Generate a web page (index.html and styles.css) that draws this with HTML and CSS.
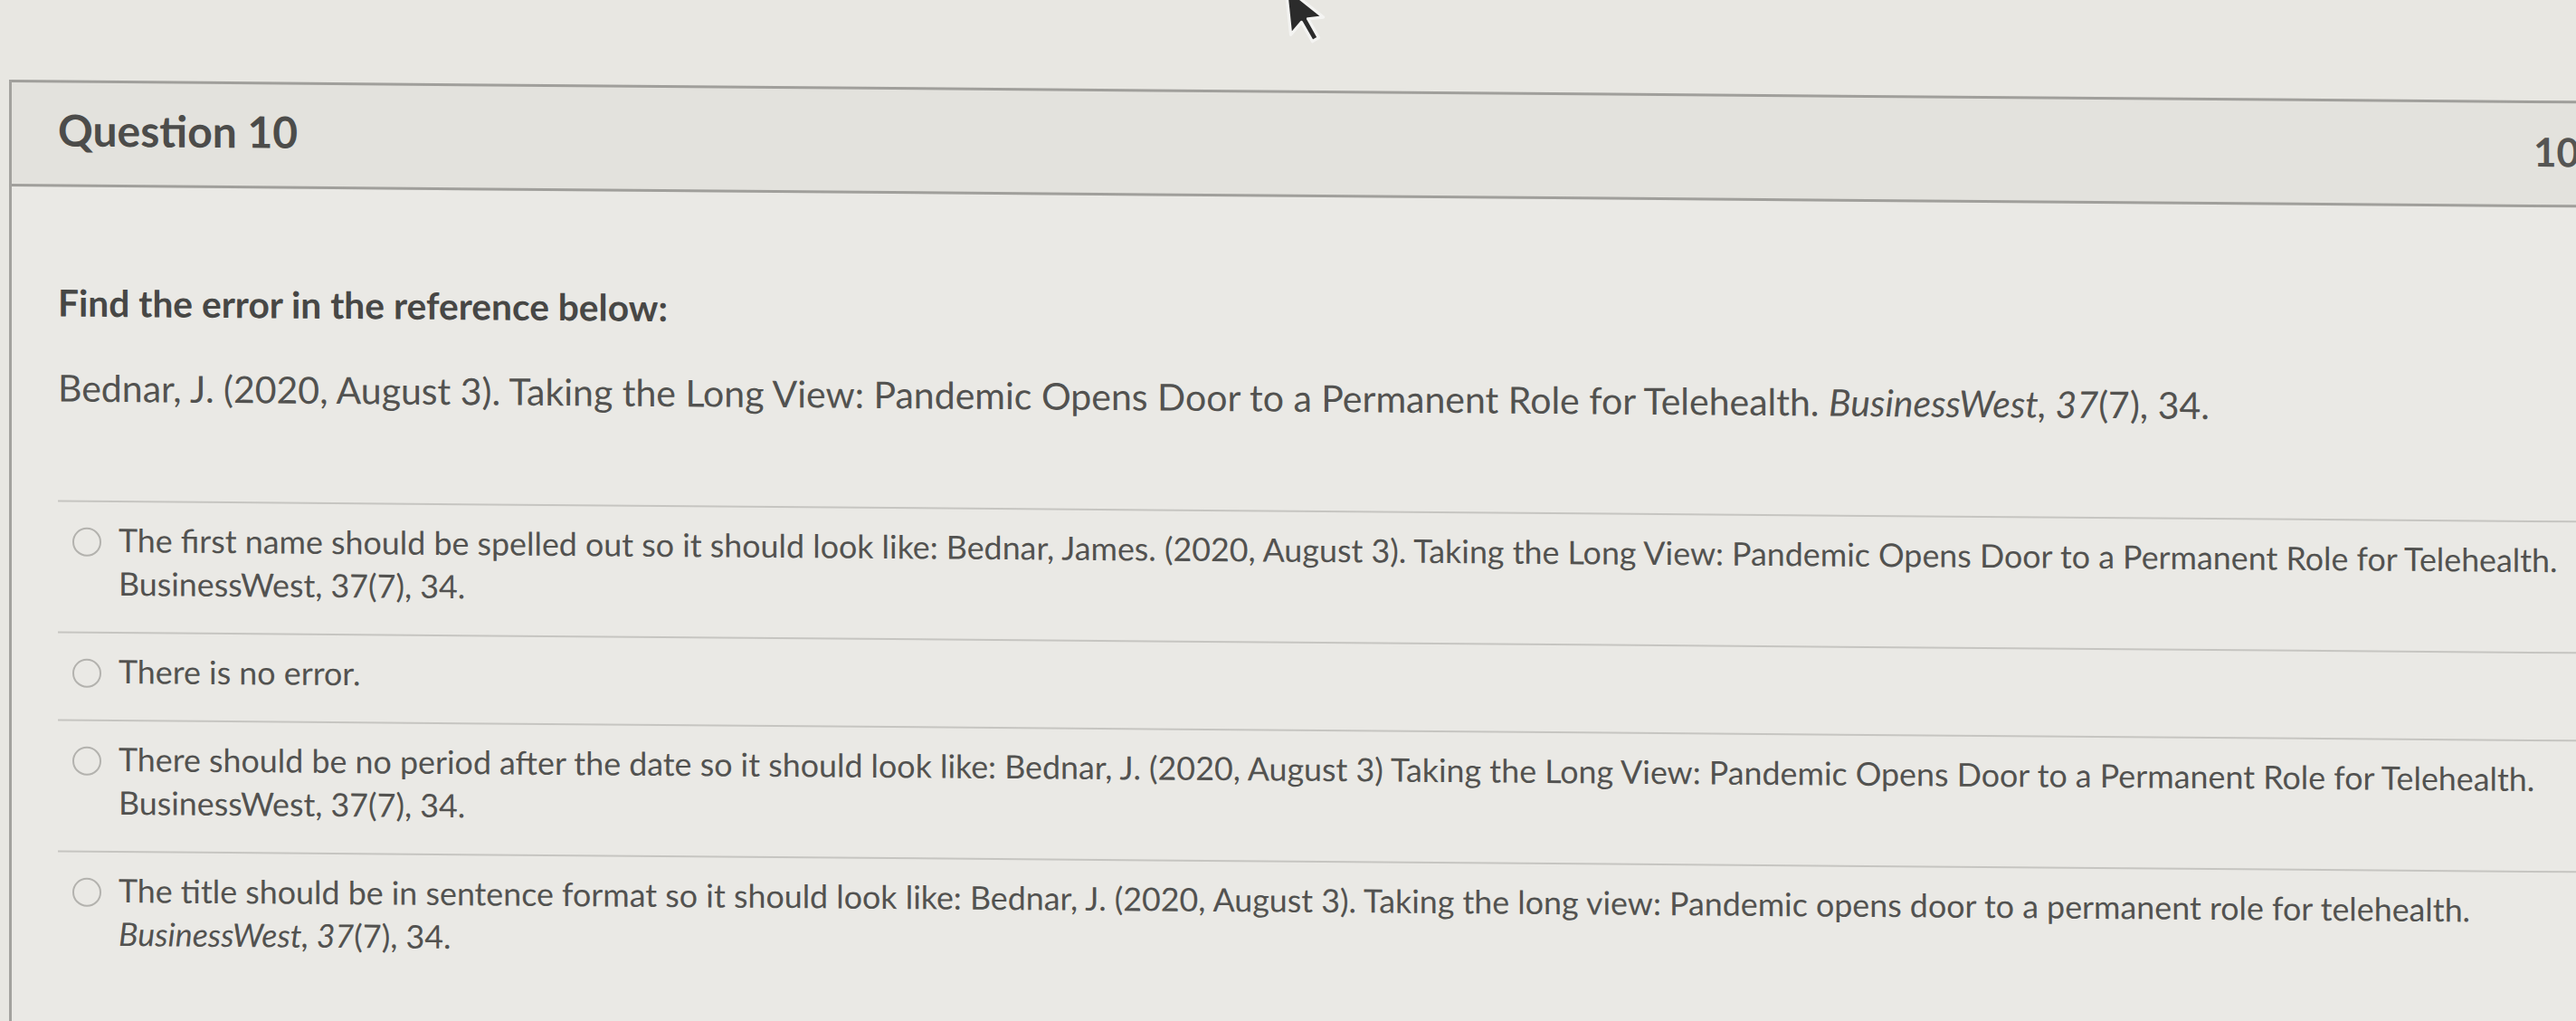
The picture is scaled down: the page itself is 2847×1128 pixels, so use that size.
FILE: index.html
```html
<!DOCTYPE html>
<html lang="en">
<head>
<meta charset="utf-8">
<title>Question 10</title>
<link rel="stylesheet" href="styles.css">
</head>
<body>
<svg class="cursor" width="46" height="70" viewBox="-1 -1 14 21" aria-hidden="true">
  <path d="M0 0 V16 L4 12.2 L7 19 L9.2 18 L6.3 11.3 H11.5 Z" fill="#2b2b2b" stroke="#f4f4f2" stroke-width="1" stroke-linejoin="round"/>
</svg>
<div class="page">
  <div class="panel">
    <div class="header">
      <span class="title">Question 10</span>
      <span class="points">10 pts</span>
    </div>
    <div class="content">
      <p class="prompt">Find the error in the reference below:</p>
      <p class="reference">Bednar, J. (2020, August 3). Taking the Long View: Pandemic Opens Door to a Permanent Role for Telehealth. <i>BusinessWest, 37</i>(7), 34.</p>
      <div class="answers">
        <div class="answer">
          <span class="radio"></span>
          <span class="label">The first name should be spelled out so it should look like: Bednar, James. (2020, August 3). Taking the Long View: Pandemic Opens Door to a Permanent Role for Telehealth.<br>BusinessWest, 37(7), 34.</span>
        </div>
        <div class="answer">
          <span class="radio"></span>
          <span class="label">There is no error.</span>
        </div>
        <div class="answer">
          <span class="radio"></span>
          <span class="label">There should be no period after the date so it should look like: Bednar, J. (2020, August 3) Taking the Long View: Pandemic Opens Door to a Permanent Role for Telehealth.<br>BusinessWest, 37(7), 34.</span>
        </div>
        <div class="answer">
          <span class="radio"></span>
          <span class="label">The title should be in sentence format so it should look like: Bednar, J. (2020, August 3). Taking the long view: Pandemic opens door to a permanent role for telehealth.<br><i>BusinessWest, 37</i>(7), 34.</span>
        </div>
      </div>
    </div>
  </div>
</div>
</body>
</html>
```
FILE: styles.css
```css
html, body {
  margin: 0;
  padding: 0;
}
body {
  width: 2847px;
  height: 1128px;
  overflow: hidden;
  background: #e8e7e2;
  font-family: Lato, "Liberation Sans", sans-serif;
  color: #525250;
  position: relative;
}
.cursor {
  position: absolute;
  left: 1421px;
  top: -20px;
  z-index: 5;
  transform: rotate(-6deg);
}
.page {
  padding: 88px 0 0 10px;
  transform: skewY(0.47deg);
  transform-origin: 0 0;
}
.panel {
  width: 2960px;
  border-left: 3px solid #a3a29e;
  background: #eae9e5;
  min-height: 1100px;
}
.header {
  display: flex;
  justify-content: space-between;
  align-items: baseline;
  padding: 23px 51px 30px 51px;
  background: #e3e2dd;
  border-top: 3px solid #a09f9b;
  border-bottom: 3px solid #a09f9b;
}
.title {
  font-size: 48px;
  line-height: 58px;
  font-weight: 700;
  color: #4c4c4a;
}
.points {
  font-size: 44px;
  line-height: 58px;
  font-weight: 700;
  color: #555553;
}
.content {
  padding: 104px 0 0 51px;
  line-height: 48px;
}
.content p {
  margin: 0;
  font-size: 40.7px;
}
.prompt {
  font-weight: 700;
  color: #474745;
}
.reference {
  margin-top: 46px !important;
  font-size: 41px !important;
  white-space: nowrap;
}
.answers {
  margin-top: 100px;
  font-size: 35.8px;
}
.answer {
  display: flex;
  align-items: flex-start;
  gap: 19px;
  padding: 18px 0 29px 16px;
  border-top: 2px solid #c6c5c1;
  white-space: nowrap;
}
.radio {
  flex: none;
  width: 28px;
  height: 28px;
  margin-top: 10px;
  border: 2.5px solid #b3b2ae;
  border-radius: 50%;
}
.label {
  display: block;
}
```
